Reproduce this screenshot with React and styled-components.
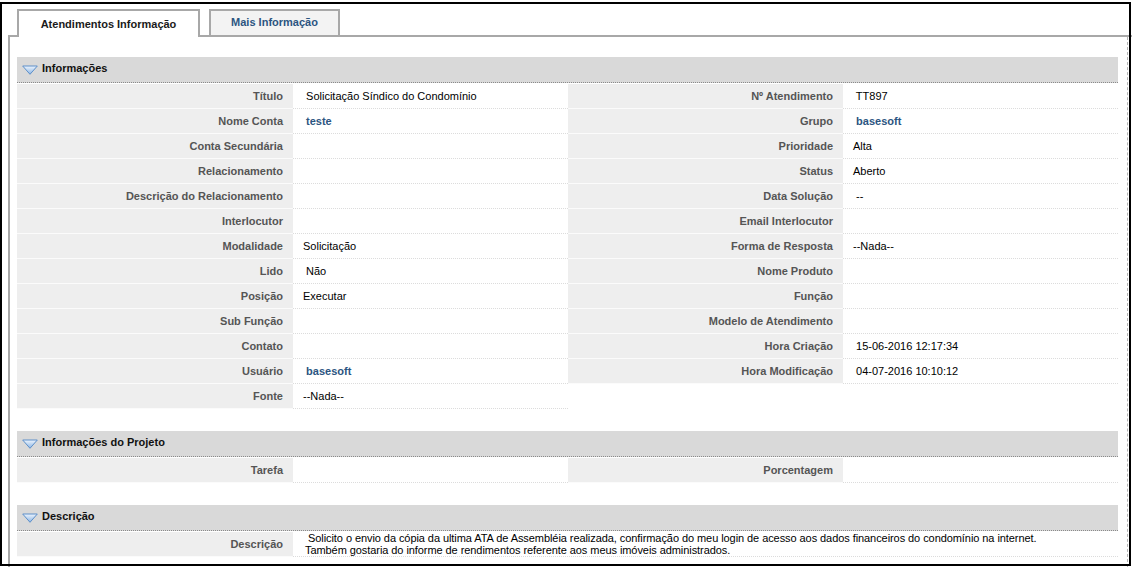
import React from 'react'
import styled, { createGlobalStyle } from 'styled-components'

const GlobalStyle = createGlobalStyle`
  html, body {
    margin: 0;
    padding: 0;
    background: #fff;
  }
  body {
    font-family: 'Liberation Sans', Arial, sans-serif;
    font-size: 11px;
    color: #000;
  }
`

const Page = styled.div`
  position: relative;
  width: 1132px;
  height: 567px;
  overflow: hidden;
  padding: 9px 0 0 8px;
  box-sizing: border-box;
`

const Frame = styled.div`
  position: absolute;
  left: 0;
  top: 2px;
  width: 1131px;
  height: 564px;
  border: 2px solid #000;
  box-sizing: border-box;
  pointer-events: none;
`

const TabStrip = styled.div`
  display: flex;
  align-items: flex-end;
  gap: 9px;
  padding-left: 9px;
  border-bottom: 2px solid #a8a8a8;
  height: 26px;
`

const Tab = styled.div`
  box-sizing: border-box;
  border: 2px solid #a8a8a8;
  border-bottom: none;
  font-weight: bold;
  display: flex;
  justify-content: center;
  white-space: nowrap;
  width: ${(p) => p.$width}px;
  height: ${(p) => (p.$active ? 28 : 26)}px;
  margin-bottom: ${(p) => (p.$active ? -2 : 0)}px;
  padding-top: ${(p) => (p.$active ? 7 : 5)}px;
  background: ${(p) => (p.$active ? '#fff' : '#f3f3f3')};
  color: ${(p) => (p.$active ? '#1a1a1a' : '#2c5581')};
`

const Panel = styled.div`
  box-sizing: border-box;
  width: 1120px;
  height: 540px;
  border-left: 2px solid #a8a8a8;
  border-right: 1px dashed #b4b4b4;
  padding: 20px 9px 0 7px;
`

const Section = styled.div`
  margin-bottom: 22px;
`

const SectionHeader = styled.div`
  box-sizing: border-box;
  display: flex;
  align-items: center;
  gap: 4px;
  height: 26px;
  padding: 0 0 3px 5px;
  background: #d9d9d9;
  border-bottom: 1px dotted #8a8a8a;
  margin-bottom: 1px;
  font-weight: bold;
  color: #111;

  svg {
    margin-top: 3px;
  }
`

const Grid = styled.div`
  display: grid;
  grid-template-columns: 276px 275px 275px 275px;
  grid-auto-rows: 25px;
`

const Label = styled.div`
  box-sizing: border-box;
  background: #eeeeee;
  border-bottom: 1px solid #fbfbfb;
  text-align: right;
  padding-right: 10px;
  font-weight: bold;
  color: #555;
  line-height: 24px;
  white-space: nowrap;
`

const Value = styled.div`
  box-sizing: border-box;
  border-bottom: 1px dotted #dcdcdc;
  padding-left: 10px;
  line-height: 24px;
  white-space: pre;
  color: ${(p) => (p.$link ? '#2c5581' : '#000')};
  font-weight: ${(p) => (p.$link ? 'bold' : 'normal')};
  grid-column: ${(p) => (p.$span ? `span ${p.$span}` : 'auto')};
`

const LongValue = styled(Value)`
  display: flex;
  flex-direction: column;
  justify-content: center;
  line-height: 12px;
  padding-left: 12px;
  letter-spacing: -0.07px;
`

const Arrow = () => (
  <svg width='16' height='10' viewBox='0 0 16 10'>
    <defs>
      <linearGradient id='arrowFill' x1='0' y1='0' x2='0' y2='1'>
        <stop offset='0' stopColor='#eef5fd' />
        <stop offset='1' stopColor='#8ab4e4' />
      </linearGradient>
    </defs>
    <polygon
      points='0.7,1 15.3,1 8,9.3'
      fill='url(#arrowFill)'
      stroke='#5d8fc9'
      strokeWidth='1'
      strokeLinejoin='round'
    />
  </svg>
)

const infoRows = [
  [['Título', ' Solicitação Síndico do Condomínio'], ['Nº Atendimento', ' TT897']],
  [['Nome Conta', ' teste', true], ['Grupo', ' basesoft', true]],
  [['Conta Secundária', ''], ['Prioridade', 'Alta']],
  [['Relacionamento', ''], ['Status', 'Aberto']],
  [['Descrição do Relacionamento', ''], ['Data Solução', ' --']],
  [['Interlocutor', ''], ['Email Interlocutor', '']],
  [['Modalidade', 'Solicitação'], ['Forma de Resposta', '--Nada--']],
  [['Lido', ' Não'], ['Nome Produto', '']],
  [['Posição', 'Executar'], ['Função', '']],
  [['Sub Função', ''], ['Modelo de Atendimento', '']],
  [['Contato', ''], ['Hora Criação', ' 15-06-2016 12:17:34']],
  [['Usuário', ' basesoft', true], ['Hora Modificação', ' 04-07-2016 10:10:12']],
  [['Fonte', '--Nada--']]
]

const Pair = ({ pair }) => {
  const [label, value, link] = pair
  return (
    <>
      <Label>{label}</Label>
      <Value $link={link}>{value}</Value>
    </>
  )
}

const App = () => {
  return (
    <>
      <GlobalStyle />
      <Page>
        <TabStrip>
          <Tab $active $width={183}>Atendimentos Informação</Tab>
          <Tab $width={131}>Mais Informação</Tab>
        </TabStrip>
        <Panel>
          <Section>
            <SectionHeader>
              <Arrow />
              Informações
            </SectionHeader>
            <Grid>
              {infoRows.map((row, i) =>
                row.map((pair, j) => <Pair key={`${i}-${j}`} pair={pair} />)
              )}
            </Grid>
          </Section>

          <Section>
            <SectionHeader>
              <Arrow />
              Informações do Projeto
            </SectionHeader>
            <Grid>
              <Pair pair={['Tarefa', '']} />
              <Pair pair={['Porcentagem', '']} />
            </Grid>
          </Section>

          <Section>
            <SectionHeader>
              <Arrow />
              Descrição
            </SectionHeader>
            <Grid>
              <Label>Descrição</Label>
              <LongValue $span={3}>
                <span>
                  {' '}Solicito o envio da cópia da ultima ATA de Assembléia realizada, confirmação do meu login de acesso aos dados financeiros do condomínio na internet.
                </span>
                <span>
                  Também gostaria do informe de rendimentos referente aos meus imóveis administrados.
                </span>
              </LongValue>
            </Grid>
          </Section>
        </Panel>
        <Frame />
      </Page>
    </>
  )
}

export default App
